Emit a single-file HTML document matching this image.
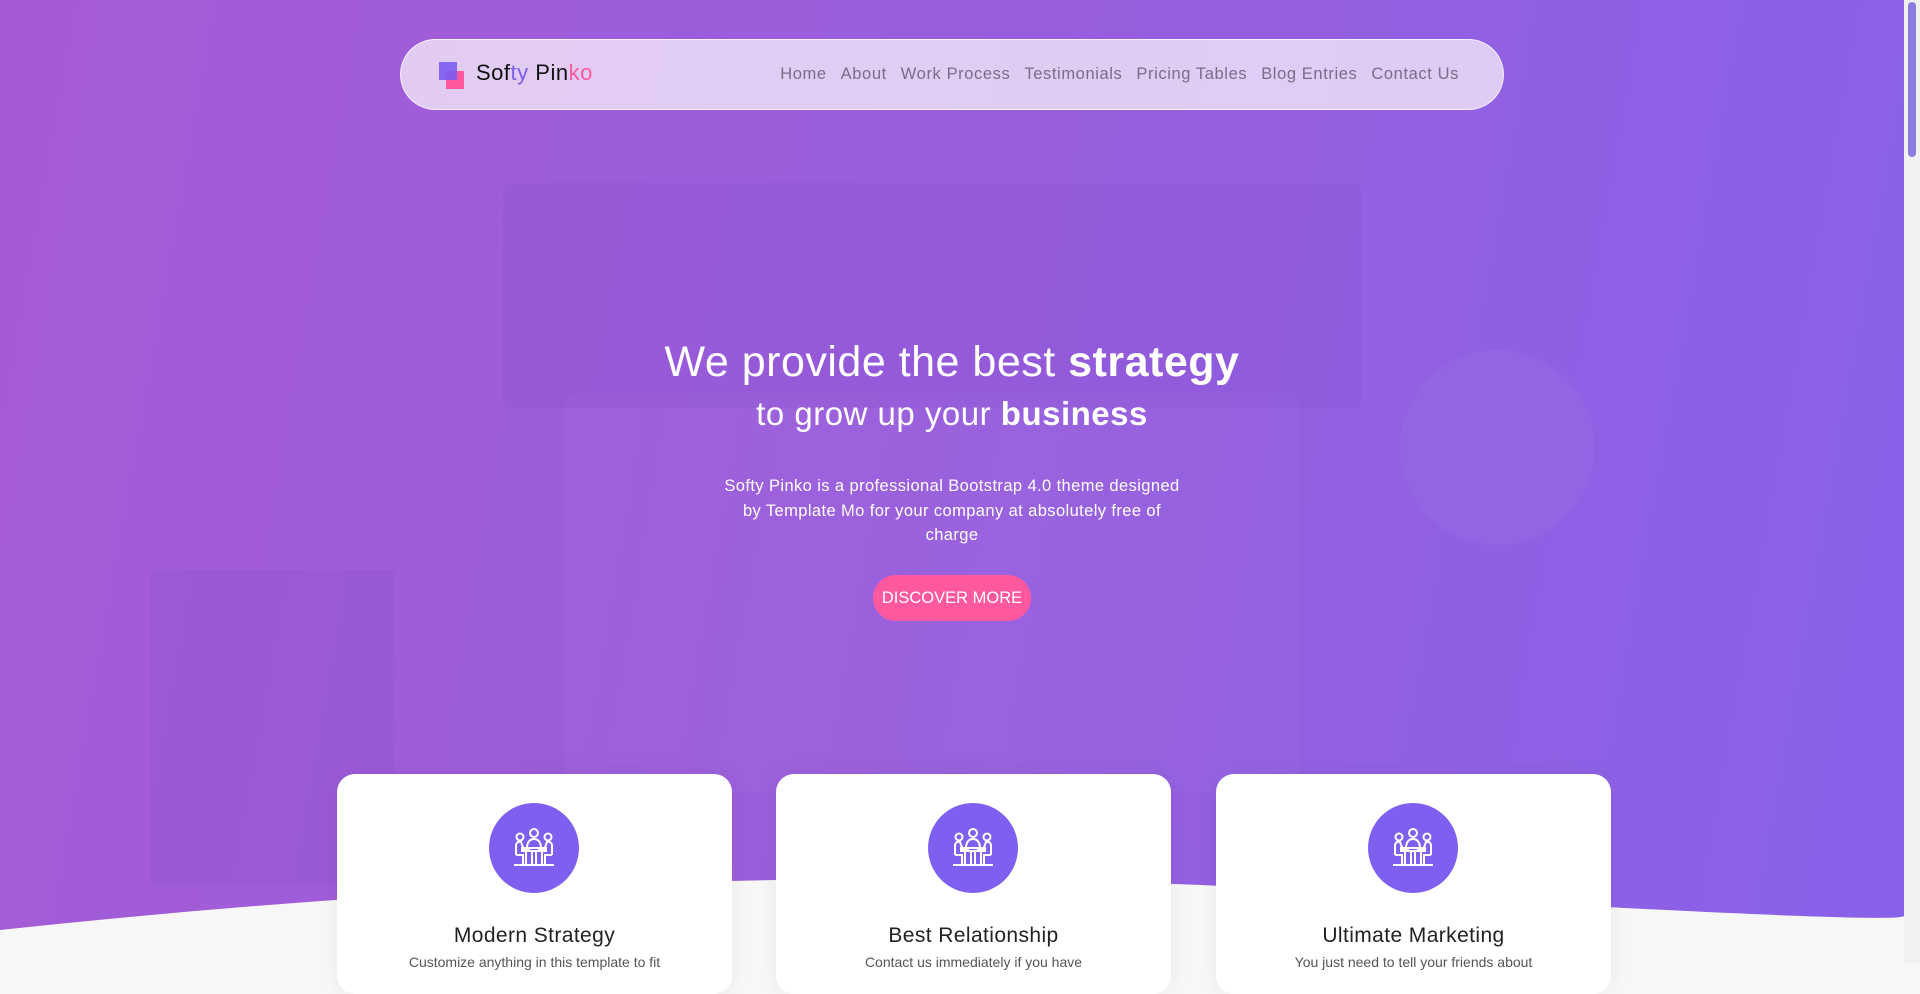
<!DOCTYPE html>
<html><head><meta charset="utf-8"><style>
*{margin:0;padding:0;box-sizing:border-box}
html,body{width:1920px;height:963px;overflow:hidden;font-family:"Liberation Sans",sans-serif;background:#f7f7f7}
.hero{position:absolute;left:0;top:0;width:1904px;height:963px;background:linear-gradient(100deg,#a65bd6 0%,#9a5edc 45%,#8862ea 100%)}
.curve2{position:absolute;left:0;top:0;width:1904px;height:963px}
nav{position:absolute;left:400px;top:39px;width:1104px;height:71px;border-radius:36px;background:rgba(240,228,248,.82);border:1px solid rgba(255,255,255,.7)}
.logo{position:absolute;left:38px;top:22px}
.sq2{position:absolute;left:7px;top:9px;width:18px;height:18px;background:#ff589e}
.sq1b{position:absolute;left:0;top:0;width:18px;height:18px;background:#7b5cf0;opacity:.9;z-index:2}
.brand{position:absolute;left:75px;top:20px;font-size:22px;color:#111;letter-spacing:.5px}
.links{position:absolute;right:44px;top:25px;font-size:16.5px;color:#7a6c86;letter-spacing:.6px}
.links span{margin-left:14px}
h1{position:absolute;left:0;width:1904px;text-align:center;color:#fff;font-weight:normal}
.t1{top:338px;font-size:43px;letter-spacing:.5px}
.t2{top:395px;font-size:33px;letter-spacing:.5px}
.p{position:absolute;left:717px;width:470px;top:474px;text-align:center;color:#fff;font-size:16.5px;line-height:24.5px;letter-spacing:.4px}
.btn{position:absolute;left:873px;top:575px;width:158px;height:46px;border-radius:23px;background:#ff589e;color:#fff;font-size:16.5px;text-align:center;line-height:46px}
.card{position:absolute;top:774px;width:395px;height:220px;background:#fff;border-radius:18px;box-shadow:0 0 20px rgba(0,0,0,.06)}
.circ{position:absolute;left:152px;top:29px;width:90px;height:90px;border-radius:50%;background:#7e5ff0}
.circ svg{position:absolute;left:22px;top:22px}
.ct{position:absolute;top:150px;width:100%;text-align:center;font-size:21px;color:#222;letter-spacing:.4px}
.cp{position:absolute;top:180px;width:100%;text-align:center;font-size:14px;color:#555}
.sb{position:absolute;left:1904px;top:0;width:16px;height:963px;background:#f1f1f1}
.sb div{position:absolute;left:4px;top:2px;width:8px;height:155px;border-radius:4px;background:#8a7ce0}
.deco{position:absolute;background:rgba(90,40,170,.06)}
</style></head><body>
<div class="hero"></div>
<div class="deco" style="left:503px;top:183px;width:858px;height:225px;border-radius:8px"></div>
<div class="deco" style="left:565px;top:392px;width:735px;height:400px;border-radius:14px;background:rgba(255,255,255,.025)"></div>
<div class="deco" style="left:150px;top:570px;width:245px;height:315px;border-radius:6px;background:rgba(80,30,160,.05)"></div>
<div class="deco" style="left:1400px;top:350px;width:195px;height:195px;border-radius:50%;background:rgba(255,255,255,.03)"></div>
<svg class="curve2" viewBox="0 0 1904 963"><path d="M0 930 Q700 855 1300 890 T1904 916 L1904 963 L0 963Z" fill="#f7f7f7"/></svg>
<nav>
<div class="logo"><div class="sq2"></div><div class="sq1b"></div></div>
<div class="brand">Sof<span style="color:#7b5cf0">ty</span> Pin<span style="color:#ff589e">ko</span></div>
<div class="links"><span>Home</span><span>About</span><span>Work Process</span><span>Testimonials</span><span>Pricing Tables</span><span>Blog Entries</span><span>Contact Us</span></div>
</nav>
<h1 class="t1">We provide the best <b>strategy</b></h1>
<h1 class="t2">to grow up your <b>business</b></h1>
<div class="p">Softy Pinko is a professional Bootstrap 4.0 theme designed by Template Mo for your company at absolutely free of charge</div>
<div class="btn">DISCOVER MORE</div>
<div class="card" style="left:337px"><div class="circ"><svg width="46" height="46" viewBox="0 0 46 46" fill="none" stroke="#fff" stroke-width="2"><circle cx="23" cy="8" r="4"/><circle cx="9" cy="12" r="3.5"/><circle cx="37" cy="12" r="3.5"/><path d="M16 22 Q17 14 23 14 Q29 14 30 22"/><path d="M5 30 V20 Q6 16 10 17 L13 25 H19"/><path d="M41 30 V20 Q40 16 36 17 L33 25 H27"/><path d="M11 23 H35 V26 H11Z"/><path d="M15 26 V40 M31 26 V40 M21 26 V40 M25 26 V40 M5 30 H12 V40 M41 30 H34 V40 M3 40 H43"/></svg></div><div class="ct">Modern Strategy</div><div class="cp">Customize anything in this template to fit</div></div>
<div class="card" style="left:776px"><div class="circ"><svg width="46" height="46" viewBox="0 0 46 46" fill="none" stroke="#fff" stroke-width="2"><circle cx="23" cy="8" r="4"/><circle cx="9" cy="12" r="3.5"/><circle cx="37" cy="12" r="3.5"/><path d="M16 22 Q17 14 23 14 Q29 14 30 22"/><path d="M5 30 V20 Q6 16 10 17 L13 25 H19"/><path d="M41 30 V20 Q40 16 36 17 L33 25 H27"/><path d="M11 23 H35 V26 H11Z"/><path d="M15 26 V40 M31 26 V40 M21 26 V40 M25 26 V40 M5 30 H12 V40 M41 30 H34 V40 M3 40 H43"/></svg></div><div class="ct">Best Relationship</div><div class="cp">Contact us immediately if you have</div></div>
<div class="card" style="left:1216px"><div class="circ"><svg width="46" height="46" viewBox="0 0 46 46" fill="none" stroke="#fff" stroke-width="2"><circle cx="23" cy="8" r="4"/><circle cx="9" cy="12" r="3.5"/><circle cx="37" cy="12" r="3.5"/><path d="M16 22 Q17 14 23 14 Q29 14 30 22"/><path d="M5 30 V20 Q6 16 10 17 L13 25 H19"/><path d="M41 30 V20 Q40 16 36 17 L33 25 H27"/><path d="M11 23 H35 V26 H11Z"/><path d="M15 26 V40 M31 26 V40 M21 26 V40 M25 26 V40 M5 30 H12 V40 M41 30 H34 V40 M3 40 H43"/></svg></div><div class="ct">Ultimate Marketing</div><div class="cp">You just need to tell your friends about</div></div>
<div class="sb"><div></div></div>
</body></html>
